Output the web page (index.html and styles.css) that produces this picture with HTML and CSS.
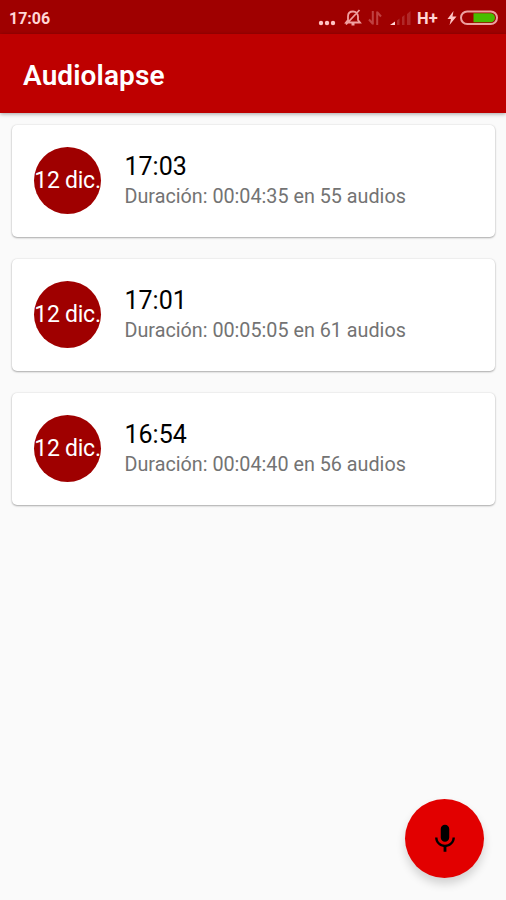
FILE: index.html
```
<!DOCTYPE html>
<html lang="es">

<head>
    <title>Audiolapse</title>
    <meta charset="UTF-8">
    <link rel="stylesheet" href="styles.css">
</head>

<body>
    <div class="status-bar">
        <span class="clock">17:06</span>
        <div class="status-icons">
            <svg class="dots" width="18" height="6" viewBox="0 0 18 6">
                <circle cx="3" cy="3" r="2.2" />
                <circle cx="9" cy="3" r="2.2" />
                <circle cx="15" cy="3" r="2.2" />
            </svg>
            <svg class="bell" width="18" height="18" viewBox="0 0 18 18">
                <path d="M2 13.500h14l-2-2.500V7.500c0-3-2-5-5-5s-5 2-5 5v3.500zM7.500 15.500h3M15.500 1L2 15.500" />
            </svg>
            <svg class="arrows" width="14" height="16" viewBox="0 0 14 16">
                <path d="M4.800 1v13.500M5 14L1 9.500M9.200 15V1.500M9 2l4 4.500" />
            </svg>
            <svg class="signal" width="22" height="16" viewBox="0 0 22 16">
                <path class="on" d="M0 15l5-3.500V15z" />
                <path d="M7 10.500l2.500-2V15H7zM12 7l2.500-2v10H12zM17 4l3.500-3v14H17z" />
            </svg>
            <span class="network">H+</span>
            <svg class="bolt" width="10" height="14" viewBox="0 0 10 14">
                <path d="M6.500 0L0.500 8h3.500l-1.500 6L9.500 5.500H5.500z" />
            </svg>
            <svg class="battery" width="39" height="16" viewBox="0 0 39 16">
                <rect class="shell" x="1" y="1.500" width="36" height="12.500" rx="6.200" />
                <path class="level" d="M13.500 3.200h17a4.500 4.500 0 0 1 0 9h-17z" />
            </svg>
        </div>
    </div>

    <div class="app-bar">
        <h1>Audiolapse</h1>
    </div>

    <div class="recordings">
        <div class="card">
            <div class="date">12 dic.</div>
            <div class="info">
                <div class="time">17:03</div>
                <div class="duration">Duración: 00:04:35 en 55 audios</div>
            </div>
        </div>
        <div class="card">
            <div class="date">12 dic.</div>
            <div class="info">
                <div class="time">17:01</div>
                <div class="duration">Duración: 00:05:05 en 61 audios</div>
            </div>
        </div>
        <div class="card">
            <div class="date">12 dic.</div>
            <div class="info">
                <div class="time">16:54</div>
                <div class="duration">Duración: 00:04:40 en 56 audios</div>
            </div>
        </div>
    </div>

    <button class="record" aria-label="Grabar">
        <svg width="34" height="34" viewBox="0 0 24 24">
            <path d="M12 14c1.660 0 2.990-1.340 2.990-3L15 5c0-1.660-1.340-3-3-3S9 3.340 9 5v6c0 1.660 1.340 3 3 3zm5.300-3c0 3-2.540 5.100-5.300 5.100S6.700 14 6.700 11H5c0 3.410 2.720 6.230 6 6.720V21h2v-3.280c3.280-.480 6-3.300 6-6.720h-1.700z" />
        </svg>
    </button>
</body>

</html>
```
FILE: styles.css
```
body {
    font-family: Roboto, "Liberation Sans", sans-serif;
    margin: 0;
    min-height: 100vh;
    background-color: #fafafa;
    color: #000;
}

.status-bar {
    display: flex;
    justify-content: space-between;
    align-items: center;
    box-sizing: border-box;
    height: 34px;
    padding: 2px 7px 0 9px;
    background-color: #9f0000;
    color: #ffd6d6;
}

.clock {
    font-size: 16px;
    font-weight: 700;
}

.status-icons {
    display: flex;
    align-items: center;
}

.status-icons svg {
    flex: none;
}

.dots {
    margin: 10px 8px 0 0;
    fill: #ffc4c4;
}

.bell {
    margin-right: 6px;
    fill: none;
    stroke: #f0a0a0;
    stroke-width: 1.800;
}

.arrows {
    margin-right: 8px;
    fill: none;
    stroke: #c04040;
    stroke-width: 2;
}

.signal {
    margin-right: 5px;
    fill: #b02828;
}

.signal .on {
    fill: #ffd6d6;
}

.network {
    width: 22px;
    margin-right: 8px;
    font-size: 16.500px;
    font-weight: 700;
}

.bolt {
    margin-right: 3px;
    fill: #ffc4c4;
}

.battery .shell {
    fill: none;
    stroke: #eda0a0;
    stroke-width: 2;
}

.battery .level {
    fill: #48bd00;
}

.app-bar {
    position: relative;
    display: flex;
    align-items: center;
    box-sizing: border-box;
    height: 79px;
    padding: 3px 23px 0;
    background-color: #be0000;
    box-shadow: 0 1px 4px rgba(0, 0, 0, 0.350);
}

.app-bar h1 {
    margin: 0;
    font-size: 28px;
    font-weight: 600;
    letter-spacing: 0.100px;
    color: #fff;
}

.recordings {
    display: flex;
    flex-direction: column;
    gap: 22px;
    padding: 11.500px 11px 0 12px;
}

.card {
    display: flex;
    align-items: center;
    box-sizing: border-box;
    height: 112.200px;
    padding: 0 22px;
    background-color: #fff;
    border-radius: 5px;
    box-shadow: 0 1px 2px rgba(0, 0, 0, 0.300), 0 0 2px rgba(0, 0, 0, 0.120);
}

.date {
    display: flex;
    align-items: center;
    justify-content: center;
    flex: none;
    box-sizing: border-box;
    width: 67px;
    height: 67px;
    margin-right: 23.500px;
    padding-bottom: 1px;
    border-radius: 50%;
    background-color: #9f0000;
    color: #fff;
    font-size: 23px;
    letter-spacing: -0.250px;
    white-space: nowrap;
}

.time {
    font-size: 25px;
    line-height: 32px;
}

.duration {
    font-size: 19.750px;
    line-height: 28px;
    color: #737373;
}

/* Floating record button */
.record {
    position: fixed;
    right: 22px;
    bottom: 22px;
    display: flex;
    align-items: center;
    justify-content: center;
    width: 79px;
    height: 79px;
    padding: 0;
    border: 0;
    border-radius: 50%;
    background-color: #e20000;
    box-shadow: 0 6px 10px rgba(0, 0, 0, 0.160);
}
```
